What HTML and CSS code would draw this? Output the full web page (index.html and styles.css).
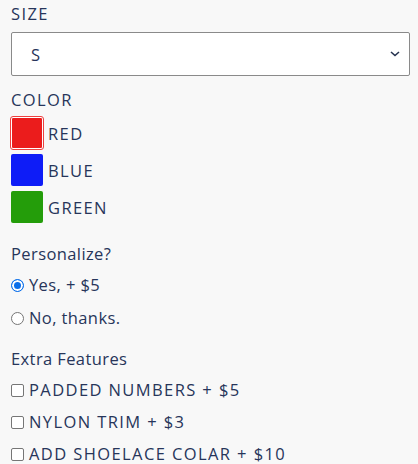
FILE: index.html
```html
<!DOCTYPE html>
<html>
<head>
<meta charset="utf-8">
<link rel="stylesheet" href="styles.css">
</head>
<body>
<form class="form">
  <div class="field">
    <div class="label caps">SIZE</div>
    <div class="select">
      <span>S</span>
      <svg class="chev" width="10" height="6" viewBox="0 0 10 6"><path d="M1 1l4 3.5L9 1" fill="none" stroke="#25324f" stroke-width="1.6"/></svg>
    </div>
  </div>
  <div class="field color">
    <div class="label caps">COLOR</div>
    <div class="swatches caps">
      <div class="swatch-row"><span class="swatch red selected"></span><span>RED</span></div>
      <div class="swatch-row"><span class="swatch blue"></span><span>BLUE</span></div>
      <div class="swatch-row"><span class="swatch green"></span><span>GREEN</span></div>
    </div>
  </div>
  <div class="field group personalize">
    <div class="label">Personalize?</div>
    <label class="opt"><span class="radio checked"></span>Yes, + $5</label>
    <label class="opt"><span class="radio"></span>No, thanks.</label>
  </div>
  <div class="field group extras">
    <div class="label">Extra Features</div>
    <label class="opt caps"><span class="check"></span>PADDED NUMBERS + $5</label>
    <label class="opt caps"><span class="check"></span>NYLON TRIM + $3</label>
    <label class="opt caps"><span class="check"></span>ADD SHOELACE COLAR + $10</label>
  </div>
</form>
</body>
</html>
```
FILE: styles.css
```css
html, body { margin: 0; padding: 0; background: #f8f8f8; }
body { font-family: "Open Sans", Lato, "Noto Sans", sans-serif; color: #27355a; font-size: 16.5px; letter-spacing: 0.4px; }
.caps { letter-spacing: 1.4px; }
.form { padding: 4px 8px 0 11px; display: flex; flex-direction: column; }
.label { line-height: 20px; margin-bottom: 8px; }
.select {
  height: 42px; border: 1px solid #8a8a8a; border-radius: 2px; background: #fff;
  display: flex; align-items: center; justify-content: space-between;
  padding: 0 9px 0 19px;
}
.color { margin-top: 14px; }
.color .label { margin-bottom: 7px; }
.swatches { display: flex; flex-direction: column; gap: 5px; }
.swatch-row { display: flex; align-items: center; gap: 5px; }
.swatch { width: 32px; height: 32px; border-radius: 2px; display: block; box-sizing: border-box; }
.red { background: #eb1c1c; }
.red.selected { border: 1px solid #fff; outline: 1px solid #ee4040; outline-offset: 0; }
.blue { background: #0e1cf7; }
.green { background: #249d0a; }
.personalize { margin-top: 21px; }
.extras { margin-top: 8px; }
.group .label { margin-bottom: 11px; }
.opt { display: flex; align-items: center; line-height: 20px; height: 20px; margin-bottom: 13px; }
.extras .opt { margin-bottom: 12px; }
.radio { width: 11px; height: 11px; border: 1px solid #767676; border-radius: 50%; background: #fff; margin: 0 5px 0 0; box-sizing: content-box; }
.radio.checked { border-color: #0b6fea; background: #0b6fea; box-shadow: inset 0 0 0 2px #fff; }
.check { width: 11px; height: 11px; border: 1px solid #767676; border-radius: 2px; background: #fff; margin-right: 5px; }
```
